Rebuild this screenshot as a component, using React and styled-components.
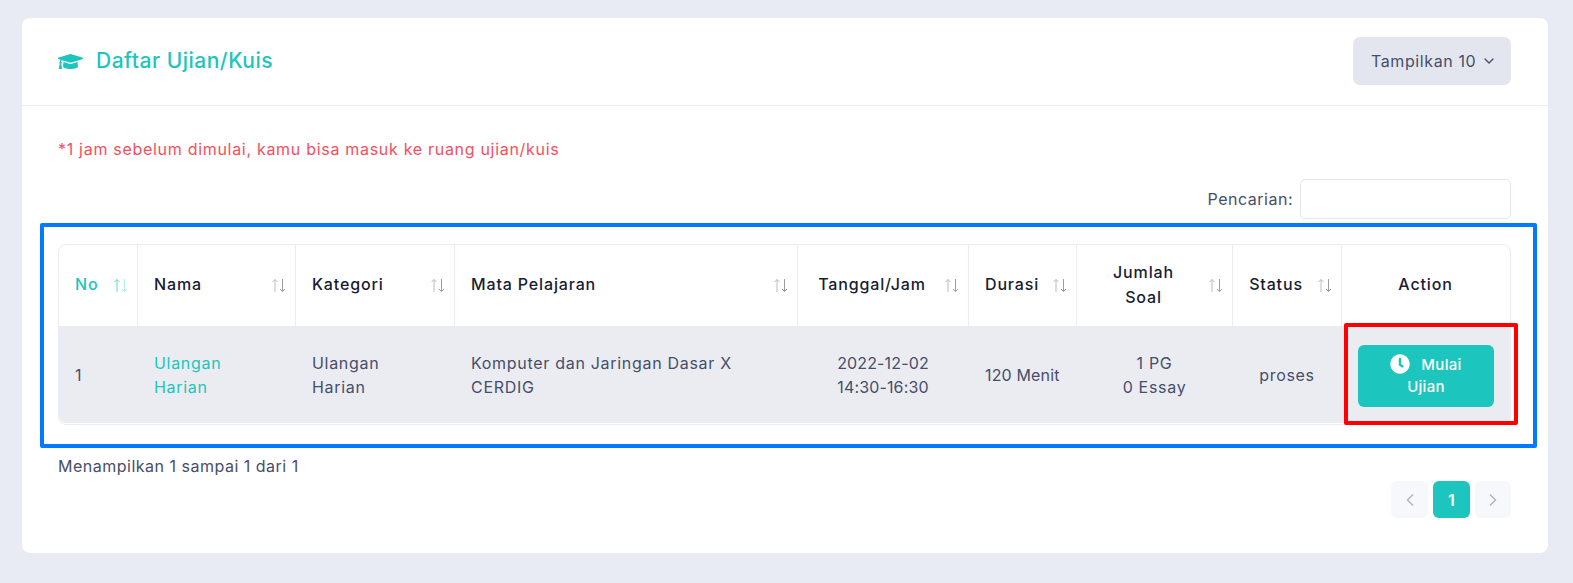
import React from 'react';
import styled, { createGlobalStyle } from 'styled-components';
import { FaGraduationCap, FaClock } from 'react-icons/fa';
import { ChevronDown, ChevronLeft, ChevronRight } from 'lucide-react';

const Global = createGlobalStyle`
  html, body { margin: 0; height: 583px; overflow: hidden; background: #e9ebf4; }
  body { font-family: Inter, "Noto Sans", sans-serif; font-size: 16px; color: #464e6b; line-height: 24px; }
  * { box-sizing: border-box; }
`;
const Page = styled.div`
  padding: 18px 25px 0 22px;
`;
const Card = styled.section`
  background: #fff;
  border-radius: 8px;
  height: 535px;
`;
const CardHeader = styled.header`
  height: 88px;
  border-bottom: 1px solid #ebedf2;
  padding: 0 37px 1px 36px;
  display: flex;
  align-items: center;
  justify-content: space-between;
`;
const Title = styled.h1`
  margin: 0;
  display: flex;
  align-items: center;
  gap: 13px;
  color: #1cc5bd;
  font-size: 21px;
  font-weight: 500;
  letter-spacing: 0.5px;
  svg { font-size: 25px; }
`;
const Dropdown = styled.button`
  width: 158px;
  height: 48px;
  border: 0;
  border-radius: 7px;
  background: #e4e6ef;
  color: #464e6b;
  font: inherit;
  letter-spacing: 0.6px;
  display: flex;
  align-items: center;
  justify-content: flex-start;
  gap: 5px;
  padding: 0 0 0 18px;
`;
const Body = styled.div`
  padding: 31px 37px 0 36px;
  display: flex;
  flex-direction: column;
`;
const Note = styled.p`
  margin: 0;
  color: #f64e60;
  letter-spacing: 0.7px;
`;
const SearchRow = styled.label`
  margin-top: 18px;
  display: flex;
  justify-content: flex-end;
  align-items: center;
  gap: 7px;
  letter-spacing: 0.5px;
`;
const SearchInput = styled.input`
  width: 211px;
  height: 40px;
  border: 1px solid #e4e6ef;
  border-radius: 5px;
  background: #fff;
`;
const TableWrap = styled.div`
  position: relative;
  margin-top: 25px;
`;
const BlueFrame = styled.div`
  position: absolute;
  left: -18px;
  right: -26px;
  top: -21px;
  bottom: -23px;
  border: 4px solid #007bff;
  border-radius: 2px;
  pointer-events: none;
`;
const Table = styled.table`
  width: 100%;
  height: 181px;
  table-layout: fixed;
  border-collapse: separate;
  border-spacing: 0;
  border: 1px solid #ebedf2;
  border-radius: 8px;
`;
const Head = styled.th`
  position: relative;
  height: 81px;
  padding: 0 ${p => (p.$sortable ? 38 : 17)}px 2px 16px;
  border-right: 1px solid #ebedf2;
  font-weight: 500;
  line-height: 25px;
  letter-spacing: 0.85px;
  text-align: ${p => (p.$center ? 'center' : 'left')};
  color: ${p => (p.$active ? '#1cc5bd' : '#181c32')};
  &:last-child { border-right: 0; }
`;
const SortIcon = styled.svg`
  position: absolute;
  right: 8px;
  top: 33px;
  width: 16px;
  height: 15px;
  fill: none;
  stroke-width: 1;
`;
const Cell = styled.td`
  position: relative;
  background: #ebecf1;
  border-bottom: 1px solid #fff;
  padding: 0 17px 0 16px;
  letter-spacing: ${p => (p.$tight ? 0.15 : 0.7)}px;
  white-space: nowrap;
  text-align: ${p => (p.$center ? 'center' : 'left')};
  color: ${p => p.$accent ? '#1cc5bd' : 'inherit'};
  &:first-child { border-bottom-left-radius: 7px; }
  &:last-child { border-bottom-right-radius: 7px; }
`;
const RedFrame = styled.div`
  position: absolute;
  left: 2px;
  right: -8px;
  top: -3px;
  bottom: -2px;
  border: 4px solid #ff0000;
  border-radius: 2px;
  pointer-events: none;
`;
const StartButton = styled.button`
  display: block;
  width: 136px;
  height: 62px;
  margin: 2px auto 0;
  border: 0;
  border-radius: 6px;
  background: #1cc5bd;
  color: #fff;
  font: inherit;
  font-size: 15px;
  line-height: 22px;
  font-weight: 500;
  letter-spacing: 0.3px;
  white-space: normal;
  padding: 0 22px;
  svg { font-size: 20px; vertical-align: -4px; margin-right: 11px; }
`;
const Info = styled.div`
  margin-top: 29px;
  letter-spacing: 0.5px;
`;
const Pager = styled.nav`
  margin-top: 3px;
  display: flex;
  justify-content: flex-end;
  gap: 5px;
`;
const PageBtn = styled.span`
  width: ${p => (p.$wide ? 37 : 36)}px;
  height: 37px;
  border-radius: 6px;
  display: flex;
  align-items: center;
  justify-content: center;
  background: ${p => (p.$active ? '#1cc5bd' : '#f7f8fb')};
  color: ${p => (p.$active ? '#fff' : '#b5b5c3')};
  font-weight: 600;
`;

function Sort({ active }) {
  const up = active ? '#5fd9d3' : '#b9bcc8';
  const down = active ? '#b5ecea' : '#9a9da9';
  return (
    <SortIcon viewBox="0 0 16 15" aria-hidden="true">
      <path d="M4 14V1.5M1.5 4L4 1.5L6.5 4" stroke={up} />
      <path d="M11.5 1V13.5M9 11L11.5 13.5L14 11" stroke={down} />
    </SortIcon>
  );
}

const cols = [
  { w: 79, label: 'No', active: true },
  { w: 158, label: 'Nama' },
  { w: 159, label: 'Kategori' },
  { w: 343, label: 'Mata Pelajaran' },
  { w: 171, label: 'Tanggal/Jam', center: true },
  { w: 108, label: 'Durasi' },
  { w: 156, label: <>Jumlah<br />Soal</>, center: true },
  { w: 109, label: 'Status', center: true },
  { w: 168, label: 'Action', center: true, plain: true },
];

export default function App() {
  return (
    <Page>
      <Global />
      <Card>
        <CardHeader>
          <Title><FaGraduationCap />Daftar Ujian/Kuis</Title>
          <Dropdown>Tampilkan 10 <ChevronDown size={16} /></Dropdown>
        </CardHeader>
        <Body>
          <Note>*1 jam sebelum dimulai, kamu bisa masuk ke ruang ujian/kuis</Note>
          <SearchRow>Pencarian:<SearchInput /></SearchRow>
          <TableWrap>
            <Table>
              <colgroup>
                {cols.map((c, i) => <col key={i} width={c.w} />)}
              </colgroup>
              <thead>
                <tr>
                  {cols.map((c, i) => (
                    <Head key={i} $center={c.center} $active={c.active} $sortable={!c.plain}>
                      {c.label}
                      {!c.plain && <Sort active={c.active} />}
                    </Head>
                  ))}
                </tr>
              </thead>
              <tbody>
                <tr>
                  <Cell>1</Cell>
                  <Cell $accent>Ulangan<br />Harian</Cell>
                  <Cell>Ulangan<br />Harian</Cell>
                  <Cell>Komputer dan Jaringan Dasar X<br />CERDIG</Cell>
                  <Cell $center $tight>2022-12-02<br />14:30-16:30</Cell>
                  <Cell $tight>120 Menit</Cell>
                  <Cell $center>1 PG<br />0 Essay</Cell>
                  <Cell $center>proses</Cell>
                  <Cell>
                    <StartButton><FaClock />Mulai Ujian</StartButton>
                    <RedFrame />
                  </Cell>
                </tr>
              </tbody>
            </Table>
            <BlueFrame />
          </TableWrap>
          <Info>Menampilkan 1 sampai 1 dari 1</Info>
          <Pager>
            <PageBtn $wide><ChevronLeft size={20} /></PageBtn>
            <PageBtn $wide $active>1</PageBtn>
            <PageBtn><ChevronRight size={20} /></PageBtn>
          </Pager>
        </Body>
      </Card>
    </Page>
  );
}
